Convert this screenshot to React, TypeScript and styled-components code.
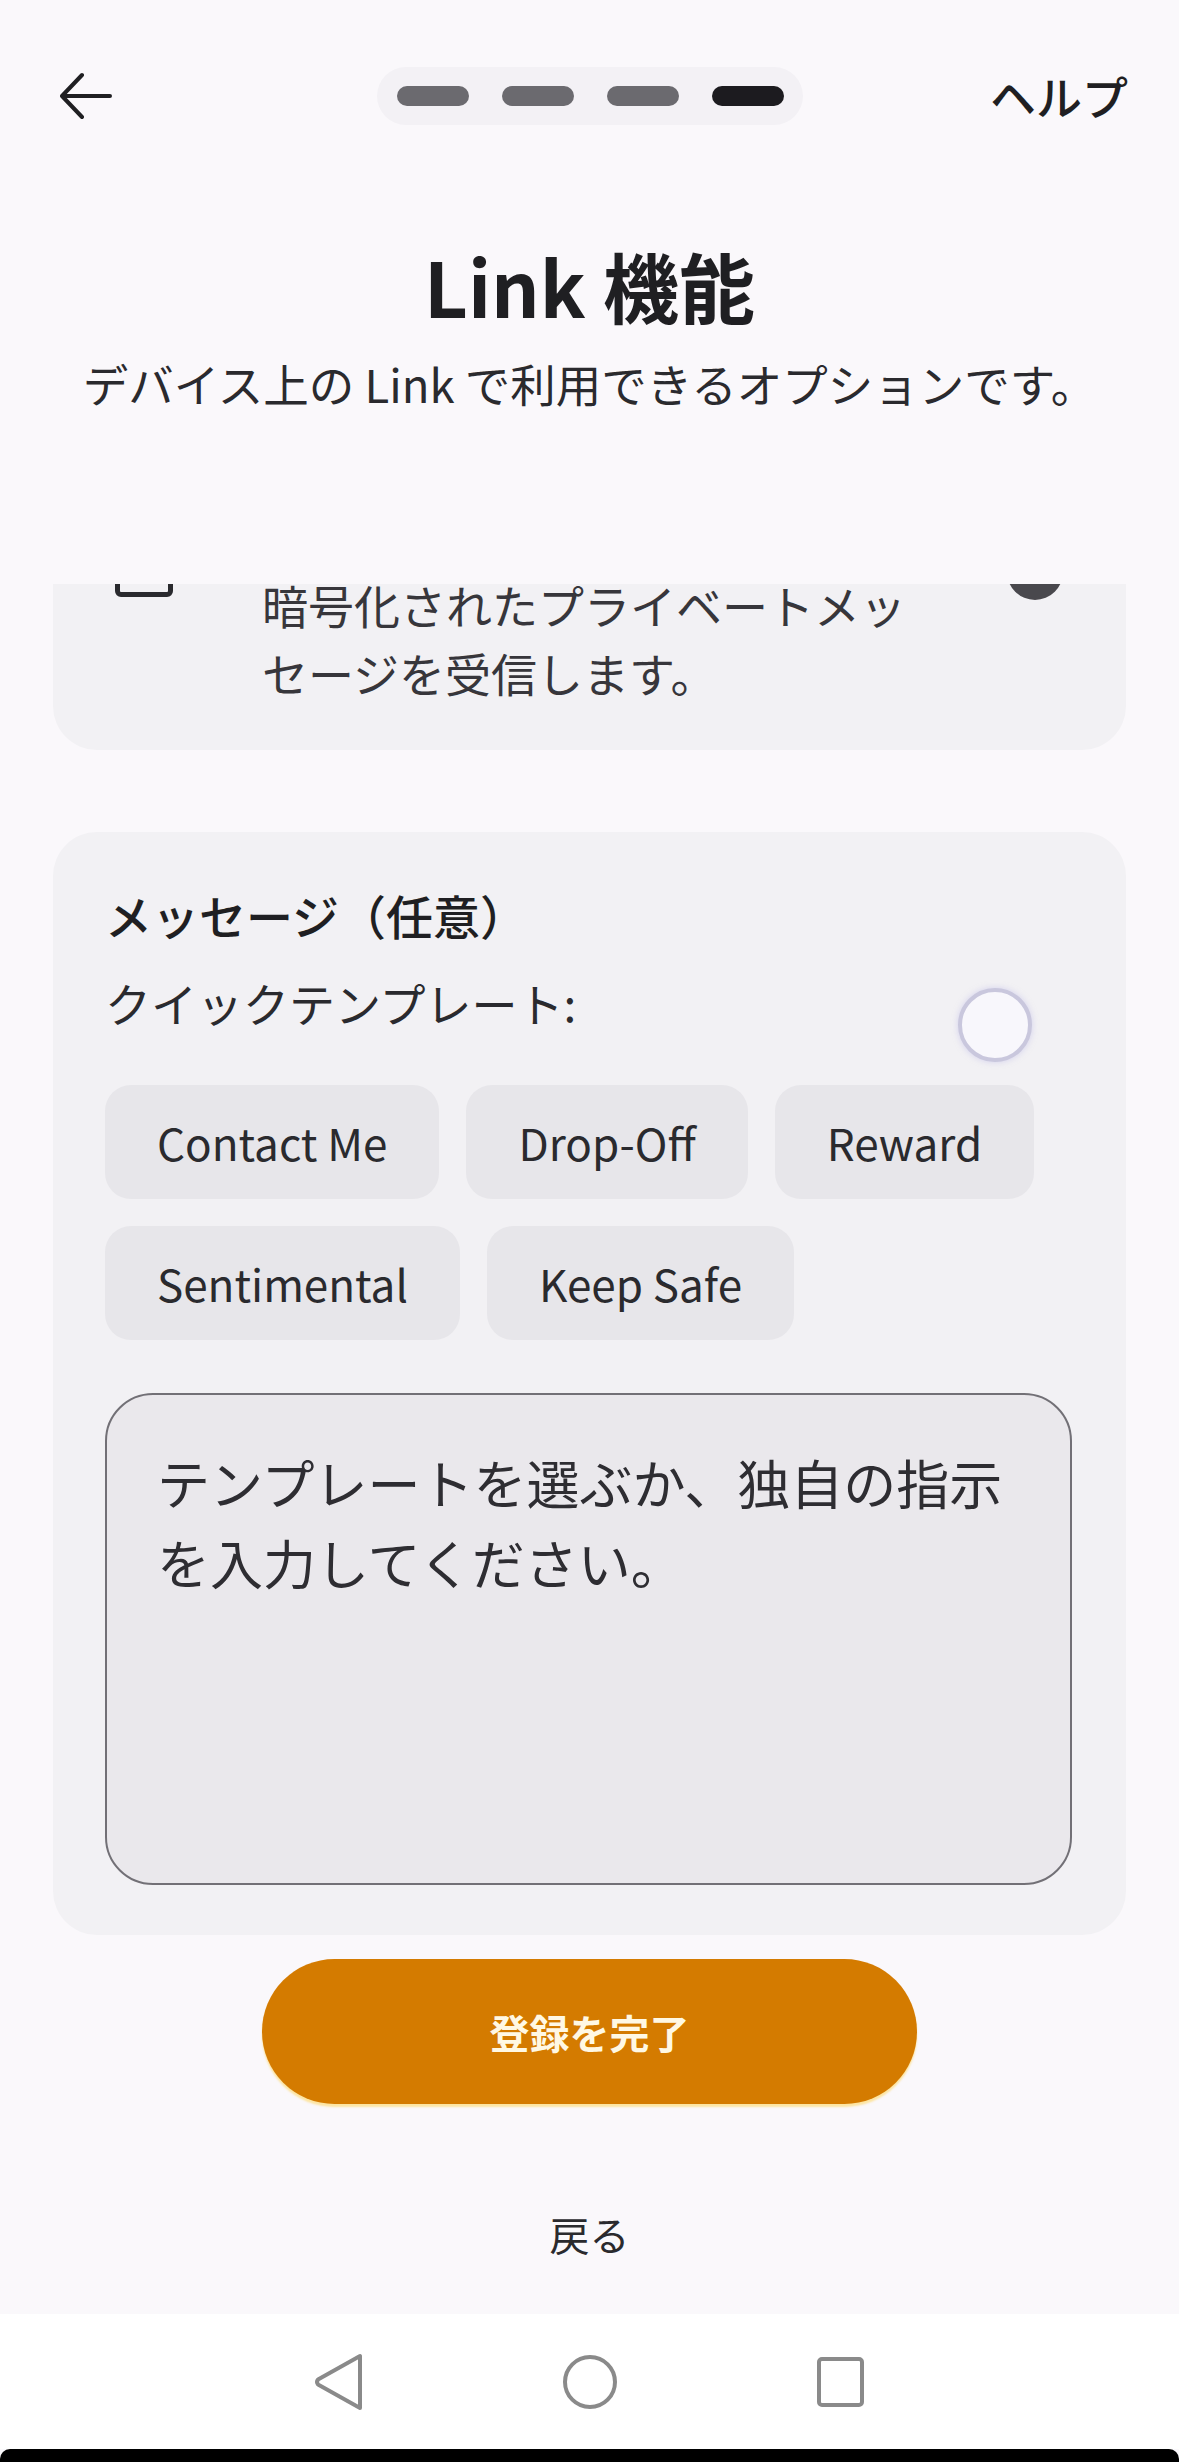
import React from "react";
import styled, { createGlobalStyle } from "styled-components";

const GlobalStyle = createGlobalStyle`
  html, body {
    margin: 0;
    padding: 0;
    background: #faf8fb;
  }
  body {
    font-family: "Noto Sans CJK JP", "Noto Sans", sans-serif;
    color: #1f1f22;
  }
  * { box-sizing: border-box; }
`;

const Screen = styled.div`
  width: 1179px;
  height: 2462px;
  display: flex;
  flex-direction: column;
  background: #faf8fb;
  overflow: hidden;
`;

const TopBar = styled.header`
  height: 192px;
  flex: none;
  display: grid;
  grid-template-columns: 1fr auto 1fr;
  align-items: center;
  padding: 0 51px;
`;

const IconButton = styled.button`
  justify-self: start;
  margin-left: 9px;
  width: 52px;
  height: 52px;
  padding: 0;
  border: none;
  background: none;
  display: flex;
  align-items: center;
  color: #1f1f22;
`;

const HelpLink = styled.span`
  justify-self: end;
  font-size: 46px;
  line-height: 60px;
  font-weight: 500;
  color: #1f1f22;
  margin-top: -2px;
`;

const Steps = styled.div`
  display: flex;
  gap: 33px;
  padding: 19px 19px 19px 20px;
  border-radius: 29px;
  background: #f3f1f5;
`;

const Step = styled.span<{ $active?: boolean }>`
  width: 72px;
  height: 20px;
  border-radius: 10px;
  background: ${(p) => (p.$active ? "#1c1b1f" : "#6b6a6f")};
`;

const Title = styled.h1`
  margin: 47px 0 0;
  text-align: center;
  font-size: 76px;
  line-height: 92px;
  font-weight: 700;
  color: #1f1f22;
  flex: none;
`;

const Subtitle = styled.p`
  margin: 22px 0 0;
  text-align: center;
  font-size: 45.5px;
  line-height: 60px;
  font-weight: 400;
  color: #2a2a2e;
  flex: none;
`;

const ScrollArea = styled.div`
  margin-top: 171px;
  height: 1360px;
  flex: none;
  overflow: hidden;
  padding: 0 53px;
`;

const ScrollContent = styled.div`
  display: flex;
  flex-direction: column;
  gap: 82px;
`;

const Card = styled.section`
  background: #f2f1f4;
  border-radius: 44px;
  position: relative;
`;

const OptionCard = styled(Card)`
  padding: 54px 63px 44px 62px;
`;

const OptionRow = styled.div`
  display: flex;
  align-items: flex-start;
`;

const CheckBox = styled.span`
  width: 58px;
  height: 58px;
  flex: none;
  border: 5px solid #2a2a2e;
  border-radius: 6px;
`;

const OptionText = styled.p`
  margin: 31px 0 0 89px;
  width: 664px;
  font-size: 46px;
  line-height: 68px;
  color: #37363b;
`;

const ToggleDot = styled.span`
  margin: 5px 0 0 auto;
  width: 56px;
  height: 56px;
  flex: none;
  border-radius: 50%;
  background: #49484d;
`;

const MessageCard = styled(Card)`
  padding: 53px 54px 50px 52px;
  display: flex;
  flex-direction: column;
`;

const SectionTitle = styled.h2`
  margin: 0;
  font-size: 47px;
  line-height: 60px;
  font-weight: 500;
  color: #1f1f22;
`;

const Label = styled.p`
  margin: 27px 0 0;
  font-size: 46px;
  line-height: 60px;
  font-weight: 400;
  color: #2a2a2e;
`;

const TouchRipple = styled.span`
  position: absolute;
  left: 905px;
  top: 156px;
  width: 74px;
  height: 74px;
  border-radius: 50%;
  background: #f8f7fc;
  border: 4px solid #c9c7dd;
  box-shadow: 0 0 6px rgba(180, 176, 230, 0.5);
`;

const Chips = styled.div`
  margin-top: 53px;
  display: flex;
  flex-wrap: wrap;
  gap: 27px;
`;

const Chip = styled.button`
  height: 114px;
  padding: 0 52px;
  border: none;
  border-radius: 26px;
  background: #e7e6ea;
  font-family: "Noto Sans CJK JP", "Noto Sans", sans-serif;
  font-size: 44px;
  font-weight: 400;
  color: #2a2a2e;
`;

const MessageBox = styled.div`
  margin-top: 53px;
  height: 492px;
  border: 2px solid #727076;
  border-radius: 48px;
  background: #eae8ec;
  padding: 47px 50px 48px 50px;
  font-size: 53px;
  line-height: 80px;
  color: #2e2d32;
`;

const PrimaryButton = styled.button`
  align-self: center;
  margin-top: 15px;
  width: 655px;
  height: 145px;
  flex: none;
  border: none;
  border-radius: 73px;
  background: #d47b00;
  box-shadow: 0 3px 2px rgba(255, 214, 90, 0.55);
  font-family: "Noto Sans CJK JP", "Noto Sans", sans-serif;
  font-size: 40px;
  font-weight: 700;
  color: #fff8e4;
`;

const BackLink = styled.span`
  align-self: center;
  margin-top: 102px;
  font-size: 40px;
  line-height: 56px;
  color: #2a2a2e;
  flex: none;
`;

const Spacer = styled.div`
  flex: 1;
`;

const NavBar = styled.nav`
  height: 135px;
  flex: none;
  background: #ffffff;
  display: flex;
  justify-content: center;
  align-items: center;
  gap: 191px;
`;

const NavIcon = styled.svg`
  width: 60px;
  height: 60px;
  color: #8a8a8a;
`;

const HomeBar = styled.div`
  height: 13px;
  flex: none;
  background: #000;
  border-radius: 10px 10px 0 0;
`;

export default function App() {
  const templates = ["Contact Me", "Drop-Off", "Reward", "Sentimental", "Keep Safe"];
  return (
    <>
      <GlobalStyle />
      <Screen>
        <TopBar>
          <IconButton aria-label="戻る">
            <svg width="52" height="52" viewBox="0 0 52 52" fill="none">
              <path
                d="M50 26H3M22 5L2 26l20 21"
                stroke="currentColor"
                strokeWidth="4"
                strokeLinecap="round"
                strokeLinejoin="round"
              />
            </svg>
          </IconButton>
          <Steps>
            <Step />
            <Step />
            <Step />
            <Step $active />
          </Steps>
          <HelpLink>ヘルプ</HelpLink>
        </TopBar>

        <Title>Link 機能</Title>
        <Subtitle>デバイス上の Link で利用できるオプションです。</Subtitle>

        <ScrollArea>
          <ScrollContent style={{ marginTop: -99 }}>
            <OptionCard>
              <OptionRow>
                <CheckBox />
                <OptionText>暗号化されたプライベートメッセージを受信します。</OptionText>
                <ToggleDot />
              </OptionRow>
            </OptionCard>

            <MessageCard>
              <SectionTitle>メッセージ（任意）</SectionTitle>
              <Label>クイックテンプレート:</Label>
              <TouchRipple />
              <Chips>
                {templates.map((t) => (
                  <Chip key={t}>{t}</Chip>
                ))}
              </Chips>
              <MessageBox>テンプレートを選ぶか、独自の指示を入力してください。</MessageBox>
            </MessageCard>
          </ScrollContent>
        </ScrollArea>

        <PrimaryButton>登録を完了</PrimaryButton>
        <BackLink>戻る</BackLink>
        <Spacer />

        <NavBar>
          <NavIcon viewBox="0 0 60 60" fill="none">
            <path
              d="M51 4V56L9 32.5Q7 30 9 27.5Z"
              stroke="currentColor"
              strokeWidth="4"
              strokeLinejoin="round"
            />
          </NavIcon>
          <NavIcon viewBox="0 0 60 60" fill="none">
            <circle cx="30" cy="30" r="25" stroke="currentColor" strokeWidth="4" />
          </NavIcon>
          <NavIcon viewBox="0 0 60 60" fill="none">
            <rect x="8" y="7" width="43" height="46" rx="3" stroke="currentColor" strokeWidth="4" />
          </NavIcon>
        </NavBar>
        <HomeBar />
      </Screen>
    </>
  );
}
